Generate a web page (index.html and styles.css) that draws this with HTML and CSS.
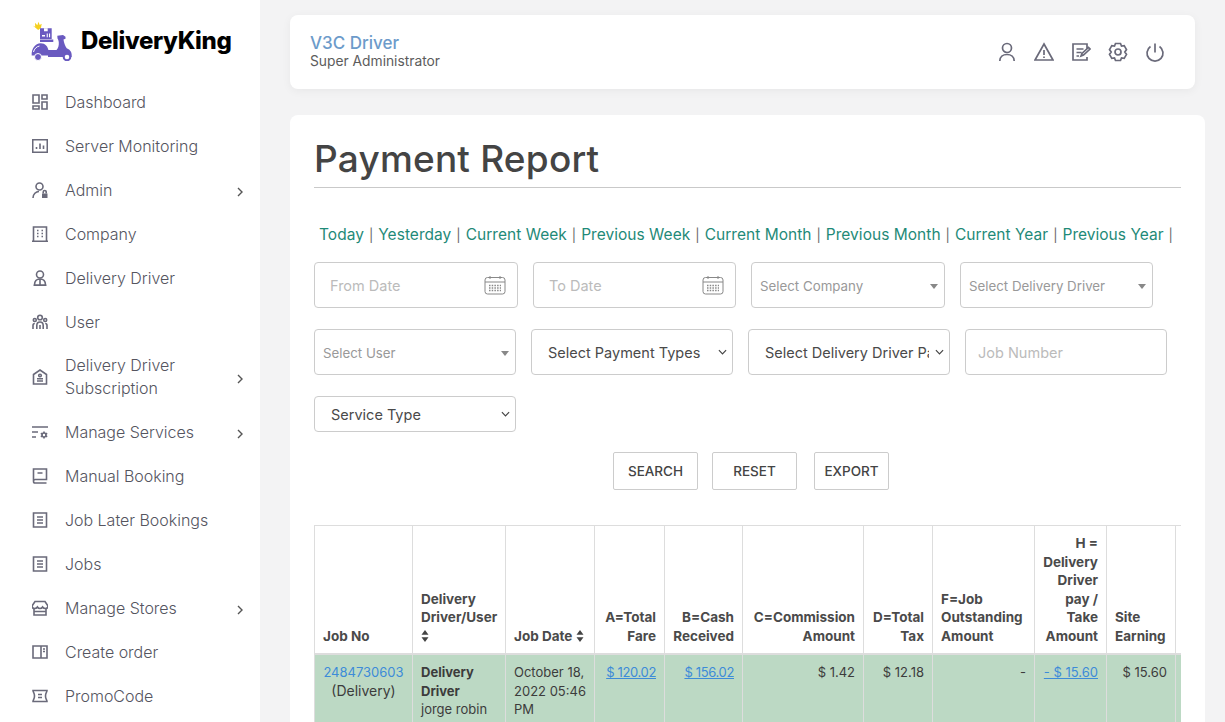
FILE: index.html
```html
<!DOCTYPE html>
<html lang="en">
<head>
<meta charset="utf-8">
<title>Payment Report</title>
<link rel="stylesheet" href="styles.css">
</head>
<body>
<aside class="sidebar">
  <div class="brand">
    <svg class="logo" viewBox="0 0 44 42" aria-hidden="true">
      <path fill="#f5d020" d="M3.700 6.500l2.500 1.200L6 3.700l2.300 2.500L9.500 2.700l1.200 3.300 2-1.200-.7 4-2.800 2.200-2.700-2.300z"/>
      <path fill="#6a5ac0" d="M11 9.300h11.700V20H11zM11 20.500h13.300v2.600H11z"/>
      <path fill="#fff" d="M15 9.300h3.700v3H15zM13 16h3v1.400h-3zM17.700 14.500h1.100v3.700h-1.100zM20 14.500h1.100v3.700H20z"/>
      <path fill="#6a5ac0" d="M2.700 36.500c-.5-6.500 3.300-12.200 9-12.200 4.500 0 7.300 3.300 7.800 7.700V36.500z"/>
      <path fill="#6a5ac0" d="M19 31h8.500c1.700-2 2.500-4.500 2.300-7.500-.1-1.700-.6-3-1.300-4l-.2-2.700 5.700-.8 2.500 1.700v2l-2 .8c.4 3 1.400 6.300 3.200 8.700 2.600.8 5 3.300 5 6.800v2H19z"/>
      <path fill="none" stroke="#fff" stroke-width="1" d="M4.500 33c.7-3 3-5.500 6-6"/>
      <circle cx="9" cy="38" r="3.500" fill="#6a5ac0" stroke="#fff" stroke-width="1"/>
      <circle cx="38" cy="38" r="3.300" fill="#fff" stroke="#6a5ac0" stroke-width="2"/>
    </svg>
    <span class="brand-name">DeliveryKing</span>
  </div>
  <nav class="menu">
    <a class="item"><svg class="ico" viewBox="0 0 16 16"><path d="M1 1h6v8H1zM10 1h5v4h-5zM1 12h6v3H1zM10 8h5v7h-5z"/></svg><span class="label">Dashboard</span></a>
    <a class="item"><svg class="ico" viewBox="0 0 16 16"><path d="M.7 1.700h14.600v12.600H.7zM4.500 11V9M8 11V5.500M11.500 11V7.500"/></svg><span class="label">Server Monitoring</span></a>
    <a class="item"><svg class="ico" viewBox="0 0 16 16"><circle cx="7.500" cy="4.500" r="3.500"/><path d="M1 16c0-4 3-6.500 6-6.500"/><path class="solid" d="M10 11.500h5.500V16H10z"/><path d="M11.200 11.500V10a1.500 1.500 0 0 1 3 0v1.500"/></svg><span class="label">Admin</span><svg class="chev" viewBox="0 0 8 10"><path d="M2 1l4 4-4 4"/></svg></a>
    <a class="item"><svg class="ico" viewBox="0 0 16 16"><path d="M1.500 15V1h13v14M0 15.300h16M5 4.500h1.500M9.500 4.500H11M5 7.500h1.500M9.500 7.500H11M5 10.500h1.500M9.500 10.500H11"/></svg><span class="label">Company</span></a>
    <a class="item"><svg class="ico" viewBox="0 0 16 16"><circle cx="8" cy="4.500" r="3.500"/><path d="M2.500 15c0-4 2.500-6 5.500-6s5.500 2 5.500 6zM8 9v6M1.500 15.300h13"/></svg><span class="label">Delivery Driver</span></a>
    <a class="item"><svg class="ico" viewBox="0 0 16 16"><circle cx="8" cy="3.500" r="2.300"/><circle cx="2.800" cy="6" r="1.500"/><circle cx="13.200" cy="6" r="1.500"/><path d="M4.800 15v-3.500c0-2 1.400-3.500 3.200-3.500s3.200 1.500 3.200 3.500V15M1 15v-3.500c0-1.300.7-2 1.800-2M15 15v-3.500c0-1.300-.7-2-1.800-2M8 11v4"/></svg><span class="label">User</span></a>
    <a class="item two"><svg class="ico" viewBox="0 0 16 16"><path d="M1.500 15V5.500L8 1l6.500 4.500V15z"/><circle cx="8" cy="6.500" r="1.300"/><path d="M5 9.800h6M5 12h6"/></svg><span class="label">Delivery Driver<br>Subscription</span><svg class="chev" viewBox="0 0 8 10"><path d="M2 1l4 4-4 4"/></svg></a>
    <a class="item"><svg class="ico" viewBox="0 0 16 16"><path d="M0 3h16M0 8h6M0 13h4"/><circle cx="12" cy="11" r="2"/><path d="M12 7.500v1.500M12 13v1.500M8.800 9.300l1.500.8M13.700 11.900l1.500.8M8.800 12.700l1.500-.8M13.700 10.100l1.500-.8"/></svg><span class="label">Manage Services</span><svg class="chev" viewBox="0 0 8 10"><path d="M2 1l4 4-4 4"/></svg></a>
    <a class="item"><svg class="ico" viewBox="0 0 16 16"><path d="M1.500 13V1h13v10.500H3a1.700 1.700 0 0 0-1.500 1.700c0 1 .7 1.800 1.500 1.800h11.500M5.500 5h5"/></svg><span class="label">Manual Booking</span></a>
    <a class="item"><svg class="ico" viewBox="0 0 16 16"><path d="M1.500 1h13v14h-13zM5 5h6M5 8h6M5 11h6"/></svg><span class="label">Job Later Bookings</span></a>
    <a class="item"><svg class="ico" viewBox="0 0 16 16"><path d="M1.500 1h13v14h-13zM5 5h6M5 8h6M5 11h6"/></svg><span class="label">Jobs</span></a>
    <a class="item"><svg class="ico" viewBox="0 0 16 16"><path d="M2 8.500V15h12V8.500M2 11.500h12M3 1.500h10L16 6c0 1.500-1.300 2.500-2.800 2.500-1 0-1.900-.5-2.600-1.500-.6 1-1.600 1.500-2.600 1.500S6 8 5.400 7C4.700 8 3.800 8.500 2.800 8.500 1.300 8.500 0 7.500 0 6z"/></svg><span class="label">Manage Stores</span><svg class="chev" viewBox="0 0 8 10"><path d="M2 1l4 4-4 4"/></svg></a>
    <a class="item"><svg class="ico" viewBox="0 0 16 16"><path d="M1 2h14v12H1zM9 2v12M11 5h2M11 7.500h2"/></svg><span class="label">Create order</span></a>
    <a class="item"><svg class="ico" viewBox="0 0 16 16"><path d="M1 2.500h14c0 2-1.500 2-1.500 5.500s1.500 3.500 1.500 5.500H1c0-2 1.500-2 1.500-5.500S1 4.500 1 2.500zM6 6.500h4M6 9.500h4"/></svg><span class="label">PromoCode</span></a>
  </nav>
</aside>

<main class="content">
  <header class="topbar">
    <div class="who">
      <div class="who-name">V3C Driver</div>
      <div class="who-role">Super Administrator</div>
    </div>
    <div class="top-icons">
      <svg class="top-ico" viewBox="0 0 20 20"><circle cx="10" cy="6" r="4.500"/><path d="M2.800 19c0-4 3.200-6.500 7.200-6.500s7.200 2.500 7.200 6.500"/></svg>
      <svg class="top-ico" viewBox="0 0 20 20"><path d="M10 2l9 16H1zM10 8v5M10 14.500v1.500"/></svg>
      <svg class="top-ico" viewBox="0 0 20 20"><path d="M16 7V2H2v16h14v-3M5.500 7h7M5.500 10.500h5M5.500 14h2.500M10 14l1-2.500 6.500-6 1.500 1.500-6.500 6z"/></svg>
      <svg class="top-ico" viewBox="0 0 20 20"><path d="M7.500 1.500h5l1 2.500 2.700-.4 2.300 4-1.700 2.400 1.700 2.400-2.300 4-2.700-.4-1 2.500h-5l-1-2.500-2.700.4-2.300-4L3.200 10 1.500 7.600l2.300-4 2.700.4z"/><circle cx="10" cy="10" r="3"/></svg>
      <svg class="top-ico" viewBox="0 0 20 20"><path d="M10 1.500v9M5.500 4.500a8 8 0 1 0 9 0"/></svg>
    </div>
  </header>

  <section class="card">
    <h1 class="title">Payment Report</h1>

    <div class="quick">
      <a>Today</a><i>|</i><a>Yesterday</a><i>|</i><a>Current Week</a><i>|</i><a>Previous Week</a><i>|</i><a>Current Month</a><i>|</i><a>Previous Month</a><i>|</i><a>Current Year</a><i>|</i><a>Previous Year</a><i>|</i>
    </div>

    <div class="filters filters-a">
      <div class="field date w-a"><span>From Date</span><svg class="cal" viewBox="0 0 22 20"><rect x="1" y="2.500" width="20" height="16.500" rx="2.500"/><path d="M1 7h20M6 1v3M16 1v3"/><path class="dots" d="M5 10.500h12M5 13h12M5 15.500h12"/></svg></div>
      <div class="field date w-b"><span>To Date</span><svg class="cal" viewBox="0 0 22 20"><rect x="1" y="2.500" width="20" height="16.500" rx="2.500"/><path d="M1 7h20M6 1v3M16 1v3"/><path class="dots" d="M5 10.500h12M5 13h12M5 15.500h12"/></svg></div>
      <div class="field s2 w-c"><span>Select Company</span><b class="caret"></b></div>
      <div class="field s2 w-d"><span>Select Delivery Driver</span><b class="caret"></b></div>
    </div>

    <div class="filters filters-b">
      <div class="field s2 w-e"><span>Select User</span><b class="caret"></b></div>
      <div class="sel tall w-e"><select class="native"><option>Select Payment Types</option></select><svg class="sel-arrow" viewBox="0 0 10 6"><path d="M1 1l4 4 4-4"/></svg></div>
      <div class="sel tall w-e"><select class="native"><option>Select Delivery Driver Payment Status</option></select><svg class="sel-arrow" viewBox="0 0 10 6"><path d="M1 1l4 4 4-4"/></svg></div>
      <div class="field job w-e"><span>Job Number</span></div>
    </div>

    <div class="filters filters-c">
      <div class="sel short w-e"><select class="native"><option>Service Type</option></select><svg class="sel-arrow" viewBox="0 0 10 6"><path d="M1 1l4 4 4-4"/></svg></div>
    </div>

    <div class="actions">
      <button class="btn b-wide">SEARCH</button>
      <button class="btn b-wide">RESET</button>
      <button class="btn b-export">EXPORT</button>
    </div>

    <div class="table-wrap">
      <table class="report">
        <colgroup>
          <col class="c1"><col class="c2"><col class="c3"><col class="c4"><col class="c5"><col class="c6"><col class="c7"><col class="c8"><col class="c9"><col class="c10"><col class="c11">
        </colgroup>
        <thead>
          <tr>
            <th>Job No</th>
            <th>Delivery Driver/User <svg class="sort" viewBox="0 0 8 12"><path d="M4 0l3.500 4.800h-7zM4 12L.5 7.200h7z"/></svg></th>
            <th>Job Date <svg class="sort" viewBox="0 0 8 12"><path d="M4 0l3.500 4.800h-7zM4 12L.5 7.200h7z"/></svg></th>
            <th class="r">A=Total Fare</th>
            <th class="r">B=Cash Received</th>
            <th class="r">C=Commission Amount</th>
            <th class="r">D=Total Tax</th>
            <th>F=Job Outstanding Amount</th>
            <th class="r">H = Delivery Driver pay / Take Amount</th>
            <th>Site Earning</th>
            <th></th>
          </tr>
        </thead>
        <tbody>
          <tr>
            <td class="c"><a class="blue">2484730603</a><br><span class="svc">(Delivery)</span></td>
            <td><strong>Delivery Driver</strong><br>jorge robin</td>
            <td>October 18, 2022 05:46 PM</td>
            <td class="r"><a class="blue u tight">$ 120.02</a></td>
            <td class="r"><a class="blue u tight">$ 156.02</a></td>
            <td class="r">$ 1.42</td>
            <td class="r">$ 12.18</td>
            <td class="r">-</td>
            <td class="r"><a class="blue u">- $ 15.60</a></td>
            <td class="r">$ 15.60</td>
            <td></td>
          </tr>
        </tbody>
      </table>
    </div>
  </section>
</main>
</body>
</html>
```

FILE: styles.css
```css
* { box-sizing: border-box; }
html, body { margin: 0; height: 722px; overflow: hidden; }
body {
  display: flex;
  background: #f3f3f4;
  font-family: Inter, "Noto Sans", sans-serif;
  color: #444;
}

/* sidebar */
.sidebar {
  flex: 0 0 260px;
  height: 722px;
  background: #fff;
  overflow: hidden;
}
.brand {
  height: 80px;
  padding: 19px 0 0 29px;
  display: flex;
  align-items: flex-start;
  gap: 8px;
}
.logo { width: 44px; height: 42px; flex: none; }
.brand-name {
  font-size: 24px;
  font-weight: 800;
  color: #000;
  line-height: 43px;
  letter-spacing: -.35px;
}
.menu { display: flex; flex-direction: column; }
.item {
  display: flex;
  align-items: center;
  padding: 10.5px 16px 10.5px 32px;
  color: #6b6b78;
  font-size: 16px;
  line-height: 23px;
}
.item.two { padding-top: 10px; padding-bottom: 10px; }
.ico {
  width: 16px;
  height: 16px;
  flex: none;
  fill: none;
  stroke: #6a6a7a;
  stroke-width: 1.6;
  margin-right: 17px;
}
.ico .solid { fill: #6a6a7a; stroke: none; }
.label { flex: 1; font-weight: 300; color: #55555f; letter-spacing: -.02px; }
.chev {
  width: 8px;
  height: 10px;
  fill: none;
  stroke: #555;
  stroke-width: 1.4;
  margin-top: 4px;
}

/* content */
.content {
  flex: 1;
  min-width: 0;
  padding: 15px 20px 0 30px;
  display: flex;
  flex-direction: column;
  gap: 26px;
}
.topbar {
  height: 74px;
  margin-right: 10px;
  background: #fff;
  border-radius: 8px;
  box-shadow: 0 2px 10px rgba(0,0,0,.05);
  padding: 0 30px 0 20px;
  display: flex;
  align-items: center;
  justify-content: space-between;
  flex: none;
}
.who { margin-top: -3px; }
.who-name { color: #6c9bca; font-size: 17px; font-weight: 500; line-height: 21px; }
.who-role { color: #5c5c5c; font-size: 13.800px; line-height: 14px; }
.top-icons { display: flex; gap: 17px; }
.top-ico {
  width: 20px;
  height: 20px;
  fill: none;
  stroke: #6a6a7a;
  stroke-width: 1.7;
}

.card {
  flex: 1;
  background: #fff;
  border-radius: 8px 8px 0 0;
  padding: 22px 24px 0;
  min-height: 0;
  overflow: hidden;
}
.title {
  margin: 0;
  font-size: 37px;
  font-weight: 500;
  line-height: 44px;
  color: #444;
  padding-bottom: 6px;
  border-bottom: 1px solid #c9c9c9;
  letter-spacing: .2px;
}
.quick {
  margin-top: 35px;
  padding-left: 5px;
  display: flex;
  align-items: center;
  font-size: 15.5px;
  line-height: 24px;
  white-space: nowrap;
}
.quick a { color: #1f8a78; letter-spacing: .03px; }
.quick i { color: #666; font-style: normal; font-size: 13px; margin: 0 5px; }

.filters { display: flex; gap: 15px; }
.filters-a { margin-top: 15px; }
.filters-b { margin-top: 21px; }
.filters-c { margin-top: 21px; }
.field {
  height: 46px;
  background: #fff;
  border: 1px solid #ccc;
  border-radius: 4px;
  display: flex;
  align-items: center;
  font-size: 14.500px;
}
.w-a { width: 204px; }
.w-b { width: 203px; }
.w-c { width: 194px; }
.w-d { width: 193px; }
.w-e { width: 202px; }
.date { padding: 0 11px 0 15px; justify-content: space-between; color: #bbb; }
.job { padding-left: 12px; color: #bbb; }
.s2 { padding: 2px 6px 0 8px; color: #999; font-size: 13.300px; justify-content: space-between; }
.caret {
  border-left: 4px solid transparent;
  border-right: 4px solid transparent;
  border-top: 5px solid #888;
}
.cal {
  width: 22px;
  height: 20px;
  fill: none;
  stroke: #888;
  stroke-width: 1;
}
.cal .dots { stroke-width: 1.300; stroke-dasharray: 1.500 1.200; }
.sel { position: relative; }
.tall { height: 46px; }
.short { height: 36px; }
.native {
  appearance: none;
  width: 100%;
  height: 100%;
  display: block;
  background: #fff;
  border: 1px solid #ccc;
  border-radius: 4px;
  color: #4a4a4a;
  font: 14.500px Inter, "Noto Sans", sans-serif;
  padding: 0 20px 0 16px;
}
.sel-arrow {
  position: absolute;
  right: 6px;
  top: 50%;
  width: 9px;
  height: 6px;
  margin-top: -3px;
  fill: none;
  stroke: #444;
  stroke-width: 1.300;
  pointer-events: none;
}

.actions {
  margin-top: 20px;
  display: flex;
  justify-content: center;
  gap: 14px;
  padding-left: 7px;
}
.btn {
  height: 38px;
  padding: 0;
  background: #fff;
  border: 1px solid #ccc;
  border-radius: 2px;
  color: #444;
  font: 500 13.5px Inter, "Noto Sans", sans-serif;
}
.b-wide { width: 85px; }
.b-export { width: 75px; margin-left: 3px; }

.table-wrap { margin-top: 35px; width: 867px; overflow: hidden; }
.report {
  border-collapse: collapse;
  table-layout: fixed;
  width: 900px;
  font-size: 13px;
  line-height: 18.500px;
}
.c1 { width: 98px; } .c2 { width: 93px; } .c3 { width: 89px; } .c4 { width: 70px; }
.c5 { width: 78px; } .c6 { width: 121px; } .c7 { width: 69px; } .c8 { width: 102px; }
.c9 { width: 72px; } .c10 { width: 69px; } .c11 { width: 39px; }
.report th, .report td { border: 1px solid #ddd; padding: 8px; vertical-align: top; }
.report th {
  vertical-align: bottom;
  text-align: left;
  font-weight: 700;
  font-size: 13.500px;
  color: #4a4a4a;
  border-bottom: 2px solid #ddd;
}
.report th.r, .report td.r { text-align: right; }
.report td.c { text-align: center; }
.report td { background: #bcd9c4; color: #3c3c3c; }
.blue { color: #3d8bd8; }
.u { text-decoration: underline; }
.tight { letter-spacing: -.35px; }
.svc { font-size: 14px; }
.sort { width: 8px; height: 12px; fill: #444; vertical-align: -1px; }
```
